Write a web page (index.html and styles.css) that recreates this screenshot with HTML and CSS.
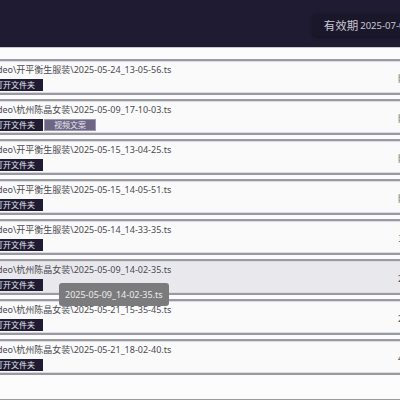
FILE: index.html
```html
<!DOCTYPE html>
<html>
<head>
<meta charset="utf-8">
<title>列表</title>
<link rel="stylesheet" href="styles.css">
</head>
<body>
<header class="topbar">
  <div class="expiry"><span class="expiry-label">有效期</span><span class="expiry-date">2025-07-01 00:00:00</span></div>
</header>
<main class="list">
  <div class="card">
    <div class="info">
      <div class="path">video\开平衡生服装\2025-05-24_13-05-56.ts</div>
      <div class="actions"><button class="btn">打开文件夹</button></div>
    </div>
    <div class="meta">附件</div>
  </div>
  <div class="card">
    <div class="info">
      <div class="path">video\杭州陈晶女装\2025-05-09_17-10-03.ts</div>
      <div class="actions"><button class="btn">打开文件夹</button><button class="btn btn-alt">视频文案</button></div>
    </div>
    <div class="meta">附件</div>
  </div>
  <div class="card">
    <div class="info">
      <div class="path">video\开平衡生服装\2025-05-15_13-04-25.ts</div>
      <div class="actions"><button class="btn">打开文件夹</button></div>
    </div>
    <div class="meta">附件</div>
  </div>
  <div class="card">
    <div class="info">
      <div class="path">video\开平衡生服装\2025-05-15_14-05-51.ts</div>
      <div class="actions"><button class="btn">打开文件夹</button></div>
    </div>
    <div class="meta">附件</div>
  </div>
  <div class="card">
    <div class="info">
      <div class="path">video\开平衡生服装\2025-05-14_14-33-35.ts</div>
      <div class="actions"><button class="btn">打开文件夹</button></div>
    </div>
    <div class="meta">1</div>
  </div>
  <div class="card card-hover">
    <div class="info">
      <div class="path">video\杭州陈晶女装\2025-05-09_14-02-35.ts</div>
      <div class="actions"><button class="btn">打开文件夹</button></div>
    </div>
    <div class="meta">2</div>
    <div class="tooltip">2025-05-09_14-02-35.ts</div>
  </div>
  <div class="card">
    <div class="info">
      <div class="path">video\杭州陈晶女装\2025-05-21_15-35-45.ts</div>
      <div class="actions"><button class="btn">打开文件夹</button></div>
    </div>
    <div class="meta">2</div>
  </div>
  <div class="card">
    <div class="info">
      <div class="path">video\杭州陈晶女装\2025-05-21_18-02-40.ts</div>
      <div class="actions"><button class="btn">打开文件夹</button></div>
    </div>
    <div class="meta">4</div>
  </div>
</main>
</body>
</html>
```
FILE: styles.css
```css
* { box-sizing: border-box; }
html, body { margin: 0; padding: 0; }
body {
  width: 400px;
  height: 400px;
  overflow: hidden;
  background: #fcfcfc;
  font-family: "Noto Sans", "Noto Sans CJK SC", sans-serif;
  display: flex;
  flex-direction: column;
}
.topbar {
  height: 48px;
  flex: none;
  background: #1f1b33;
  border-bottom: 1px solid #c9c9cf;
  display: flex;
  justify-content: flex-end;
  align-items: flex-start;
  padding-top: 14px;
  overflow: hidden;
}
.expiry {
  flex: none;
  height: 22px;
  margin-right: -60px;
  padding: 0 10px 0 11px;
  background: #1b172b;
  border-radius: 3px;
  box-shadow: 0 1px 4px rgba(0,0,0,0.45);
  display: flex;
  align-items: center;
  gap: 2px;
  white-space: nowrap;
}
.expiry-label {
  font-family: "Noto Sans CJK SC", sans-serif;
  font-size: 11.5px;
  color: #c9c8d2;
}
.expiry-date {
  font-size: 9.5px;
  color: #c9c8d2;
}
.list {
  flex: 1;
  padding-top: 11px;
  margin-left: -20px;
  margin-right: -40px;
  display: flex;
  flex-direction: column;
  gap: 4px;
  border-bottom: 1px solid #9a9aa2;
  overflow: hidden;
}
.card {
  position: relative;
  height: 36px;
  flex: none;
  background: #fafafa;
  border-top: 2px solid #9a9aa3;
  border-bottom: 2px solid #9a9aa3;
  box-shadow: inset 0 1px 0 #dcdce0, inset 0 -1px 0 #dcdce0;
  display: flex;
  align-items: center;
  padding-left: 10px;
  padding-right: 18px;
}
.card-hover { background: #e9e9ed; }
.info {
  flex: 1;
  display: flex;
  flex-direction: column;
  gap: 3px;
  padding-top: 1px;
}
.path {
  font-family: "Noto Sans", "Noto Sans CJK SC", sans-serif;
  font-size: 9px;
  line-height: 12px;
  color: #4a4a52;
  white-space: nowrap;
}
.actions {
  display: flex;
  gap: 1px;
}
.btn {
  font-family: "Noto Sans CJK SC", sans-serif;
  font-size: 8px;
  line-height: 10px;
  height: 12px;
  padding: 0 7px 0 4px;
  margin: 0;
  border: 1px solid #1f1b33;
  background: #1f1b33;
  color: #e8e8ee;
  border-radius: 0;
}
.btn-alt {
  background: #6c6583;
  border-color: #9b95ad;
  padding: 0 9px;
}
.meta {
  flex: none;
  width: 24px;
  font-family: "Noto Sans CJK SC", sans-serif;
  font-size: 9px;
  color: #555;
  padding-top: 2px;
  white-space: nowrap;
}
.tooltip {
  position: absolute;
  left: 79px;
  top: 22px;
  z-index: 2;
  height: 23px;
  padding: 0 6px;
  background: #7b7b7d;
  border-radius: 3px;
  color: #ececec;
  font-size: 9px;
  line-height: 23px;
  white-space: nowrap;
}
```
